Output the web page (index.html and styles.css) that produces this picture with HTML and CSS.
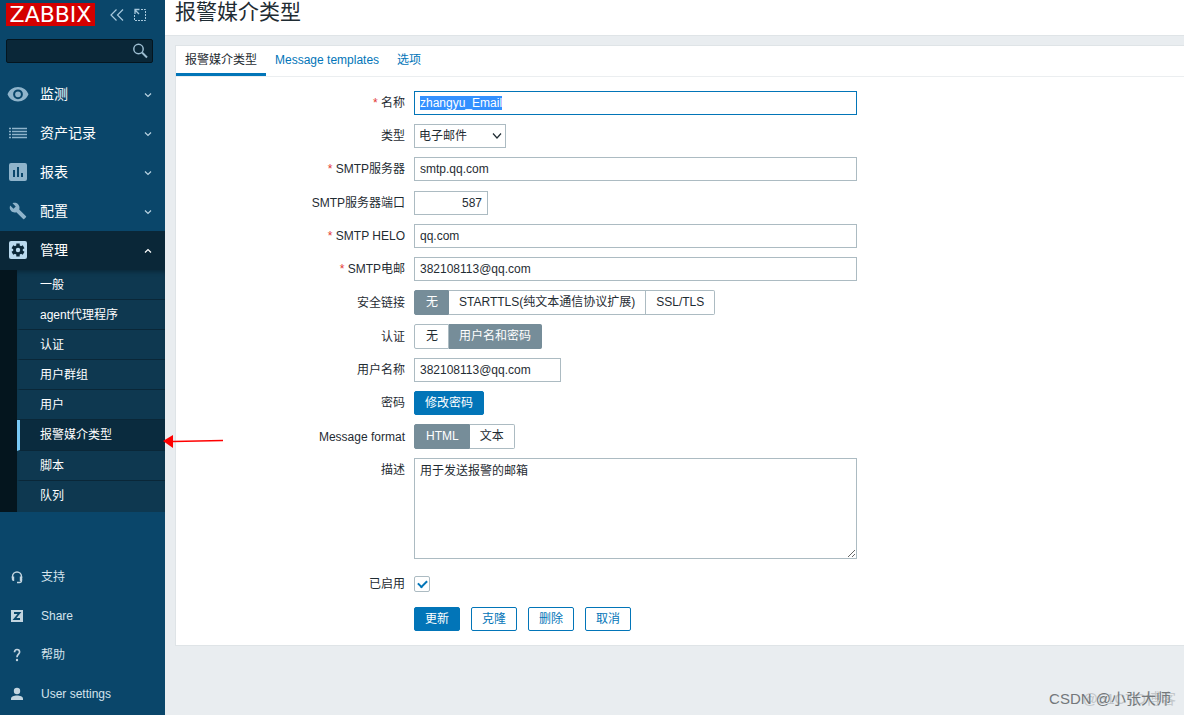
FILE: index.html
```html
<!DOCTYPE html>
<html lang="zh-CN">
<head>
<meta charset="utf-8">
<title>报警媒介类型</title>
<link rel="stylesheet" href="styles.css">
</head>
<body>
<div class="layout">
<aside class="sidebar">
  <div class="brand">
    <a class="logo" href="#">ZABBIX</a>
    <button class="icon-btn" type="button" aria-label="折叠"><svg width="16" height="16" viewBox="0 0 16 16" fill="none" stroke="currentColor" stroke-width="1.2"><path d="M7.5 2.5 2 8l5.500 5.500M14 2.500 8.500 8l5.500 5.500"/></svg></button>
    <button class="icon-btn" type="button" aria-label="隐藏"><svg width="14" height="14" viewBox="0 0 14 14" fill="none" stroke="currentColor"><path d="M1.500 7v5.500h11v-11H7" stroke-dasharray="2 1"/><path d="M2 6V1.500h4.500M2 2l4 4" stroke-width="1.300"/></svg></button>
  </div>
  <form class="search">
    <input type="text" class="search-input" aria-label="搜索">
    <button class="search-btn" type="button" aria-label="搜索"><svg width="16" height="16" viewBox="0 0 16 16" fill="none" stroke="currentColor"><circle cx="6.500" cy="6" r="4.700" stroke-width="1.500"/><path d="m10 9.500 5 5" stroke-width="2"/></svg></button>
  </form>
  <nav class="nav">
    <a class="nav-item" href="#"><svg class="nav-icon" width="22" height="18" viewBox="0 0 22 18"><path fill="currentColor" fill-rule="evenodd" d="M11 2C6 2 2.200 5 .500 9.300c1.700 4.300 5.500 7.200 10.500 7.200s8.800-2.900 10.500-7.200C19.800 5 16 2 11 2Zm0 2.400a4.900 4.900 0 1 1 0 9.800 4.900 4.900 0 0 1 0-9.800Zm0 2a2.900 2.900 0 1 0 0 5.800 2.900 2.900 0 0 0 0-5.800Z"/></svg><span class="nav-text">监测</span><svg class="chevron" width="8" height="8" viewBox="0 0 8 8"><path d="m1 2.500 3 3 3-3"/></svg></a>
    <a class="nav-item" href="#"><svg class="nav-icon" width="22" height="18" viewBox="0 0 22 18"><path stroke="currentColor" stroke-width="1.400" d="M2 4.500h2M5 4.500h15M2 7.500h2M5 7.500h15M2 10.500h2M5 10.500h15M2 13.500h2M5 13.500h15"/></svg><span class="nav-text">资产记录</span><svg class="chevron" width="8" height="8" viewBox="0 0 8 8"><path d="m1 2.500 3 3 3-3"/></svg></a>
    <a class="nav-item" href="#"><svg class="nav-icon" width="22" height="18" viewBox="0 0 22 18"><path fill="currentColor" fill-rule="evenodd" d="M4 0h14a2 2 0 0 1 2 2v14a2 2 0 0 1-2 2H4a2 2 0 0 1-2-2V2a2 2 0 0 1 2-2Zm2 7v7h2V7H6Zm4-3v10h2V4h-2Zm4 6v4h2v-4h-2Z"/></svg><span class="nav-text">报表</span><svg class="chevron" width="8" height="8" viewBox="0 0 8 8"><path d="m1 2.500 3 3 3-3"/></svg></a>
    <a class="nav-item" href="#"><svg class="nav-icon" width="22" height="18" viewBox="-1 0 26 24"><path fill="currentColor" d="m22.700 19-9.100-9.100c.9-2.300.4-5-1.500-6.900-2-2-5-2.400-7.400-1.300L9 6 6 9 1.600 4.700C.4 7.100.9 10.100 2.900 12.100c1.900 1.900 4.600 2.400 6.900 1.500l9.100 9.100c.4.400 1 .4 1.400 0l2.300-2.300c.5-.4.5-1.100.1-1.400Z"/></svg><span class="nav-text">配置</span><svg class="chevron" width="8" height="8" viewBox="0 0 8 8"><path d="m1 2.500 3 3 3-3"/></svg></a>
    <a class="nav-item nav-item-open" href="#"><svg class="nav-icon" width="22" height="18" viewBox="0 0 22 18"><rect x="2" width="18" height="18" rx="2" fill="currentColor"/><g stroke="#0a2738" stroke-width="3.400"><path d="M11 2.500v13M5.400 5.700l11.200 6.600M5.400 12.300l11.200-6.600"/></g><circle cx="11" cy="9" r="4.800" fill="#0a2738"/><circle cx="11" cy="9" r="2.200" fill="currentColor"/></svg><span class="nav-text">管理</span><svg class="chevron" width="8" height="8" viewBox="0 0 8 8"><path d="m1 5.500 3-3 3 3"/></svg></a>
    <div class="submenu">
      <a class="sub-item" href="#">一般</a>
      <a class="sub-item" href="#">agent代理程序</a>
      <a class="sub-item" href="#">认证</a>
      <a class="sub-item" href="#">用户群组</a>
      <a class="sub-item" href="#">用户</a>
      <a class="sub-item sub-item-current" href="#">报警媒介类型</a>
      <a class="sub-item" href="#">脚本</a>
      <a class="sub-item" href="#">队列</a>
    </div>
  </nav>
  <nav class="tools">
    <a class="tool" href="#"><svg class="tool-icon" width="14" height="14" viewBox="0 0 14 14"><path d="M2.500 8V6.500a4.500 4.500 0 0 1 9 0V8M11.500 9v1.500a2 2 0 0 1-2 2H7" fill="none" stroke="currentColor" stroke-width="1.400"/><path fill="currentColor" d="M1.800 6.500h2.400V11H3.500a1.700 1.700 0 0 1-1.700-1.700ZM9.800 6.500h2.400v2.800a1.700 1.700 0 0 1-1.700 1.700h-.7Z"/></svg>支持</a>
    <a class="tool" href="#"><svg class="tool-icon" width="14" height="14" viewBox="0 0 14 14"><path fill="currentColor" d="M1 1h12v12H1Z"/><path fill="none" stroke="#0a466a" stroke-width="1.800" d="M4 4h5.500L4.500 10H10"/></svg>Share</a>
    <a class="tool" href="#"><svg class="tool-icon" width="14" height="14" viewBox="0 0 14 14"><path fill="none" stroke="currentColor" stroke-width="1.700" d="M4.500 4.200C4.500 2.500 5.500 1.500 7 1.500s2.600 1 2.600 2.500C9.600 6 7 6.300 7 9.200"/><circle cx="7" cy="12" r="1.200" fill="currentColor"/></svg>帮助</a>
    <a class="tool" href="#"><svg class="tool-icon" width="14" height="14" viewBox="0 0 14 14"><circle cx="7" cy="4" r="3.200" fill="currentColor"/><path fill="currentColor" d="M1 13v-1.500C1 9.500 4 8.400 7 8.400s6 1.100 6 3.100V13Z"/></svg>User settings</a>
  </nav>
</aside>
<main class="main">
  <header class="page-head"><h1 class="page-title">报警媒介类型</h1></header>
  <section class="card">
    <div class="tabs">
      <a class="tab tab-current" href="#">报警媒介类型</a>
      <a class="tab" href="#">Message templates</a>
      <a class="tab" href="#">选项</a>
    </div>
    <form class="form">
      <div class="row"><label class="label required" for="name">名称</label><input class="field" id="name" type="text" value="zhangyu_Email"></div>
      <div class="row"><label class="label" for="type">类型</label><div class="select-wrap"><select class="select" id="type"><option>电子邮件</option></select><svg class="select-arrow" width="10" height="8" viewBox="0 0 10 8"><path d="m1 1.500 4 4.500 4-4.500"/></svg></div></div>
      <div class="row row-server"><label class="label required" for="server">SMTP服务器</label><input class="field" id="server" type="text" value="smtp.qq.com"></div>
      <div class="row"><label class="label" for="port">SMTP服务器端口</label><input class="field field-port" id="port" type="text" value="587"></div>
      <div class="row"><label class="label required" for="helo">SMTP HELO</label><input class="field" id="helo" type="text" value="qq.com"></div>
      <div class="row"><label class="label required" for="email">SMTP电邮</label><input class="field" id="email" type="text" value="382108113@qq.com"></div>
      <div class="row" role="radiogroup" aria-labelledby="sec"><span class="label" id="sec">安全链接</span><div class="segments"><label class="segment"><input type="radio" name="sec" checked>无</label><label class="segment"><input type="radio" name="sec">STARTTLS(纯文本通信协议扩展)</label><label class="segment"><input type="radio" name="sec">SSL/TLS</label></div></div>
      <div class="row" role="radiogroup" aria-labelledby="auth"><span class="label" id="auth">认证</span><div class="segments"><label class="segment"><input type="radio" name="auth">无</label><label class="segment"><input type="radio" name="auth" checked>用户名和密码</label></div></div>
      <div class="row"><label class="label" for="user">用户名称</label><input class="field field-user" id="user" type="text" value="382108113@qq.com"></div>
      <div class="row"><label class="label" for="pwd">密码</label><button class="btn btn-primary" id="pwd" type="button">修改密码</button></div>
      <div class="row" role="radiogroup" aria-labelledby="fmt"><span class="label" id="fmt">Message format</span><div class="segments"><label class="segment"><input type="radio" name="fmt" checked>HTML</label><label class="segment"><input type="radio" name="fmt">文本</label></div></div>
      <div class="row row-area"><label class="label" for="desc">描述</label><textarea class="field area" id="desc">用于发送报警的邮箱</textarea></div>
      <div class="row row-check"><label class="label" for="enabled">已启用</label><input class="check" id="enabled" type="checkbox" checked></div>
      <div class="row actions"><button class="btn btn-primary" type="button">更新</button><button class="btn" type="button">克隆</button><button class="btn" type="button">删除</button><button class="btn" type="button">取消</button></div>
    </form>
  </section>
</main>
</div>
<svg class="arrow" width="62" height="16" viewBox="0 0 62 16"><path d="M10 8.500 60 7.500" stroke="#f00" stroke-width="1.500"/><path fill="#f00" d="M0 8 10 2v13Z"/></svg>
<div class="mark mark-under">@51CTO博客</div>
<div class="mark">CSDN @小张大师</div>
<script src="main.js"></script>
</body>
</html>
```
FILE: styles.css
```css
*, ::before, ::after { box-sizing: border-box; }
body {
  margin: 0;
  position: relative;
  background: #e9edf0;
  color: #1f2c33;
  font: 12px/16px "Liberation Sans", "Noto Sans CJK SC", sans-serif;
}
a { text-decoration: none; color: inherit; }
button, input, select, textarea { font: inherit; color: inherit; margin: 0; }
::selection { background: #3390ff; color: #fff; }

.layout { display: flex; min-height: 100vh; }

.sidebar {
  flex: 0 0 165px;
  min-width: 0;
  display: flex;
  flex-direction: column;
  background: #0a466a;
  color: #fff;
}
.brand { display: flex; align-items: center; gap: 8px; padding: 3px 6px 0; height: 26px; }
.logo {
  width: 89px;
  height: 23px;
  margin-right: 6px;
  background: #d40000;
  font: 22px/23px "DejaVu Sans", sans-serif;
  text-align: center;
}
.icon-btn { display: flex; padding: 0; border: 0; background: none; color: #a8c9dd; }
.search {
  display: flex;
  align-items: center;
  height: 24px;
  margin: 13px 12px 12px 6px;
  border: 1px solid #04151f;
  border-radius: 2px;
  background: #0a2738;
}
.search-input { flex: 1; width: 0; min-width: 0; height: 22px; border: 0; background: none; outline: 0; padding: 0 6px; }
.search-btn { display: flex; padding: 0 4px; border: 0; background: none; color: #9cbdd1; }

.nav-item {
  display: flex;
  align-items: center;
  height: 39px;
  padding: 0 13px 2px 7px;
  font-size: 14px;
}
.nav-icon { margin-right: 11px; color: #8fb4cb; }
.nav-text { flex: 1; }
.chevron { fill: none; stroke: #b9d3e2; stroke-width: 1.2; margin-top: 3px; }
.nav-item-open { background: #0a2738; }
.nav-item-open .nav-icon { color: #b9d9ee; }
.nav-item-open .chevron { stroke: #fff; }
.submenu {
  padding: 0 0 1px;
  border-left: 17px solid #04151e;
  background: #0e3850;
  box-shadow: inset 0 4px 4px -2px #0a2738;
}
.sub-item {
  display: block;
  height: 30px;
  padding: 7px 0 0 20px;
  border-bottom: 1px solid #0a2738;
  border-left: 3px solid transparent;
}
.sub-item:last-child { border-bottom: 0; }
.sub-item-current { height: 31px; background: #0a2b3e; border-left-color: #78c8f5; }

.tools { margin-top: auto; padding-bottom: 2px; color: #d5e3ec; }
.tool { display: flex; align-items: center; height: 39px; padding-left: 10px; }
.tool-icon { margin-right: 17px; color: #c3d5e0; }

.main { flex: 1; min-width: 0; }
.page-head { height: 36px; padding-left: 10px; background: #fff; border-bottom: 1px solid #dfe4e7; }
.page-title { margin: 0; font-size: 21px; line-height: 24px; font-weight: 400; }
.card { margin: 9px 0 0 10px; background: #fff; border: 1px solid #dfe4e7; border-right: 0; }
.tabs { display: flex; border-bottom: 1px solid #ebeef0; color: #0275b8; }
.tab { height: 30px; padding: 6px 9px 0; }
.tab-current { color: #1f2c33; border-bottom: 3px solid #0275b8; }

.form { display: flex; flex-direction: column; gap: 9px; padding: 14px 10px 14px 0; }
.row { display: flex; align-items: center; gap: 9px; }
.row-server { padding-bottom: 1px; }
.label { flex: 0 0 229px; text-align: right; }
.required::before { content: "* "; color: #e33734; }
.field {
  flex: 0 1 443px;
  min-width: 0;
  height: 24px;
  padding: 0 5px;
  border: 1px solid #acbbc2;
  border-radius: 0;
  background: #fff;
  outline: 0;
}
.field:focus { border-color: #0275b8; }
.field-port { flex-basis: 74px; text-align: right; }
.field-user { flex-basis: 147px; }
.area { height: 101px; padding: 4px 5px; resize: vertical; display: block; }
.select-wrap { display: grid; align-items: center; width: 92px; }
.select {
  grid-area: 1 / 1;
  appearance: none;
  height: 24px;
  padding: 0 4px;
  border: 1px solid #acbbc2;
  border-radius: 0;
  background: #fff;
}
.select-arrow {
  grid-area: 1 / 1;
  justify-self: end;
  margin-right: 4px;
  fill: none;
  stroke: #1f2c33;
  stroke-width: 1.2;
  pointer-events: none;
}
.segments { display: flex; }
.segment {
  height: 25px;
  padding: 3px 10px 0;
  border: 1px solid #acbbc2;
  border-left-width: 0;
}
.segment:first-child { border-left-width: 1px; border-radius: 2px 0 0 2px; padding-left: 11px; }
.segment:last-child { border-radius: 0 2px 2px 0; }
.segment input { position: absolute; opacity: 0; pointer-events: none; }
.segment:has(input:checked) { background: #768d99; border-color: #768d99; color: #fff; }
.btn {
  height: 24px;
  padding: 0 10px;
  border: 1px solid #0275b8;
  border-radius: 2px;
  background: #fff;
  color: #0275b8;
}
.btn-primary { background: #0275b8; color: #fff; }
.row-area { align-items: flex-start; }
.row-area .label { padding-top: 4px; }
.row-check { padding-top: 8px; }
.check {
  appearance: none;
  width: 16px;
  height: 16px;
  border: 1px solid #acbbc2;
  border-radius: 2px;
  display: grid;
  place-items: center;
}
.check:checked::before {
  content: "";
  width: 9px;
  height: 6px;
  border: solid #0275b8;
  border-width: 0 0 2px 2px;
  transform: translateY(-1px) rotate(-45deg);
}
.actions { padding: 6px 0 0 238px; gap: 11px; }

.arrow { position: absolute; left: 163px; top: 433px; }
.mark {
  position: absolute;
  right: 13px;
  bottom: 6px;
  font-size: 15px;
  line-height: 20px;
  color: #73787b;
  pointer-events: none;
}
.mark-under { right: 8px; color: #c3c7ca; }
```
FILE: main.js
```js
const nameField = document.getElementById("name");
nameField.focus();
nameField.select();
```
